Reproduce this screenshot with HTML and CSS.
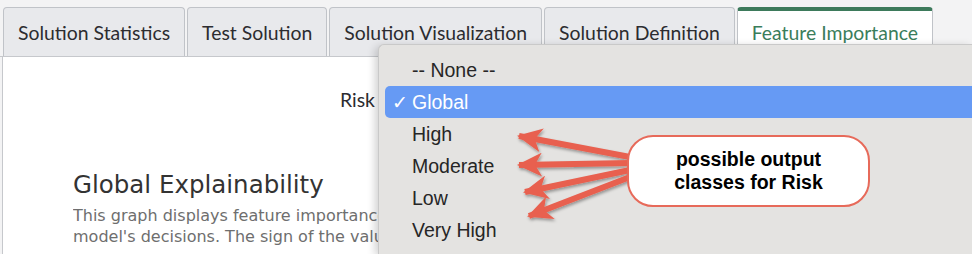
FILE: index.html
```html
<!DOCTYPE html>
<html lang="en">
<head>
    <meta charset="UTF-8">
    <title>Feature Importance</title>
    <link rel="stylesheet" href="styles.css">
</head>
<body>
    <div class="tabs">
        <div class="tab">Solution Statistics</div>
        <div class="tab">Test Solution</div>
        <div class="tab">Solution Visualization</div>
        <div class="tab">Solution Definition</div>
        <div class="tab active">Feature Importance</div>
    </div>

    <div class="panel">
        <div class="risk-row">
            <label for="riskClass">Risk</label>
        </div>
        <h2>Global Explainability</h2>
        <p>This graph displays feature importance for the whole dataset.<br>
            model's decisions. The sign of the value indicates the direction of the influence.</p>
    </div>

    <ul class="menu">
        <li>-- None --</li>
        <li class="selected"><span class="check">✓</span>Global</li>
        <li>High</li>
        <li>Moderate</li>
        <li>Low</li>
        <li>Very High</li>
    </ul>

    <svg class="arrows" width="972" height="254" viewBox="0 0 972 254">
        <defs>
            <marker id="head" markerUnits="userSpaceOnUse" markerWidth="26" markerHeight="24" refX="23" refY="12" orient="auto">
                <path d="M25 12 L0 0 L7 12 L0 24 Z" fill="#e8604f"/>
            </marker>
            <filter id="shadow" x="-10%" y="-20%" width="120%" height="140%">
                <feDropShadow dx="1" dy="2" stdDeviation="1.5" flood-color="#000" flood-opacity="0.35"/>
            </filter>
        </defs>
        <g filter="url(#shadow)" stroke="#e8604f" stroke-width="6" marker-end="url(#head)">
            <line x1="630" y1="157" x2="519" y2="136"/>
            <line x1="630" y1="163" x2="519" y2="165"/>
            <line x1="630" y1="170" x2="525" y2="192"/>
            <line x1="630" y1="177" x2="529" y2="216"/>
        </g>
    </svg>

    <div class="callout">possible output<br>classes for Risk</div>
</body>
</html>
```

FILE: styles.css
```css
body {
    font-family: Lato, "Open Sans", sans-serif;
    background-color: #f3f3f4;
    margin: 0;
    padding: 0;
    width: 972px;
    height: 254px;
    overflow: hidden;
    position: relative;
}
.tabs {
    display: flex;
    gap: 2px;
    padding: 7px 0 0 3px;
    border-bottom: 1px solid #c6c8cc;
}
.tab {
    background-color: #e8e9ec;
    border: 1px solid #c0c3c8;
    border-bottom: none;
    border-radius: 4px 4px 0 0;
    padding: 0 14px;
    height: 48px;
    line-height: 50px;
    font-size: 19.4px;
    color: #2c2c30;
}
.tab.active {
    background-color: #fff;
    color: #3a7d5b;
    border-top: 4px solid #3d7a5b;
    height: 46px;
    line-height: 44px;
    margin-bottom: -1px;
}
.panel {
    background-color: #fff;
    border-left: 1px solid #c6c8cc;
    margin-left: 2px;
    height: 197px;
    overflow: hidden;
}
.risk-row {
    padding: 31px 0 0 337px;
    font-size: 19.4px;
    color: #2c2c30;
}
h2 {
    font-family: "DejaVu Sans", Verdana, sans-serif;
    font-weight: normal;
    font-size: 24.5px;
    color: #333;
    margin: 59px 0 0 70px;
}
p {
    font-family: "DejaVu Sans", Verdana, sans-serif;
    font-size: 16px;
    line-height: 21px;
    color: #6e6e6e;
    margin: 6px 0 0 70px;
    white-space: nowrap;
    width: 305px;
    overflow: hidden;
}
.menu {
    position: absolute;
    left: 378px;
    top: 44px;
    box-sizing: border-box;
    width: 594px;
    height: 210px;
    margin: 0;
    padding: 9px 0 0 6px;
    list-style: none;
    background-color: #e4e3e1;
    border: 1px solid #c9c9c9;
    border-right: none;
    border-bottom: none;
    border-radius: 6px 0 0 0;
    box-shadow: -3px 2px 8px rgba(0, 0, 0, 0.18);
    font-family: "Liberation Sans", Arial, sans-serif;
    font-size: 19.5px;
    color: #262626;
}
.menu li {
    height: 32px;
    line-height: 32px;
    padding-left: 27px;
}
.menu li.selected {
    background-color: #669af4;
    color: #fff;
    border-radius: 5px 0 0 5px;
    padding-left: 7px;
}
.check {
    display: inline-block;
    width: 20px;
    font-family: "DejaVu Sans", sans-serif;
    font-size: 19px;
}
.arrows {
    position: absolute;
    left: 0;
    top: 0;
}
.callout {
    position: absolute;
    left: 627px;
    top: 135px;
    width: 239px;
    height: 68px;
    border: 2px solid #e76a5a;
    border-radius: 26px;
    background-color: #fff;
    display: flex;
    align-items: center;
    justify-content: center;
    text-align: center;
    font-family: "Liberation Sans", Arial, sans-serif;
    font-weight: bold;
    font-size: 19.5px;
    line-height: 23px;
    color: #000;
}
```
